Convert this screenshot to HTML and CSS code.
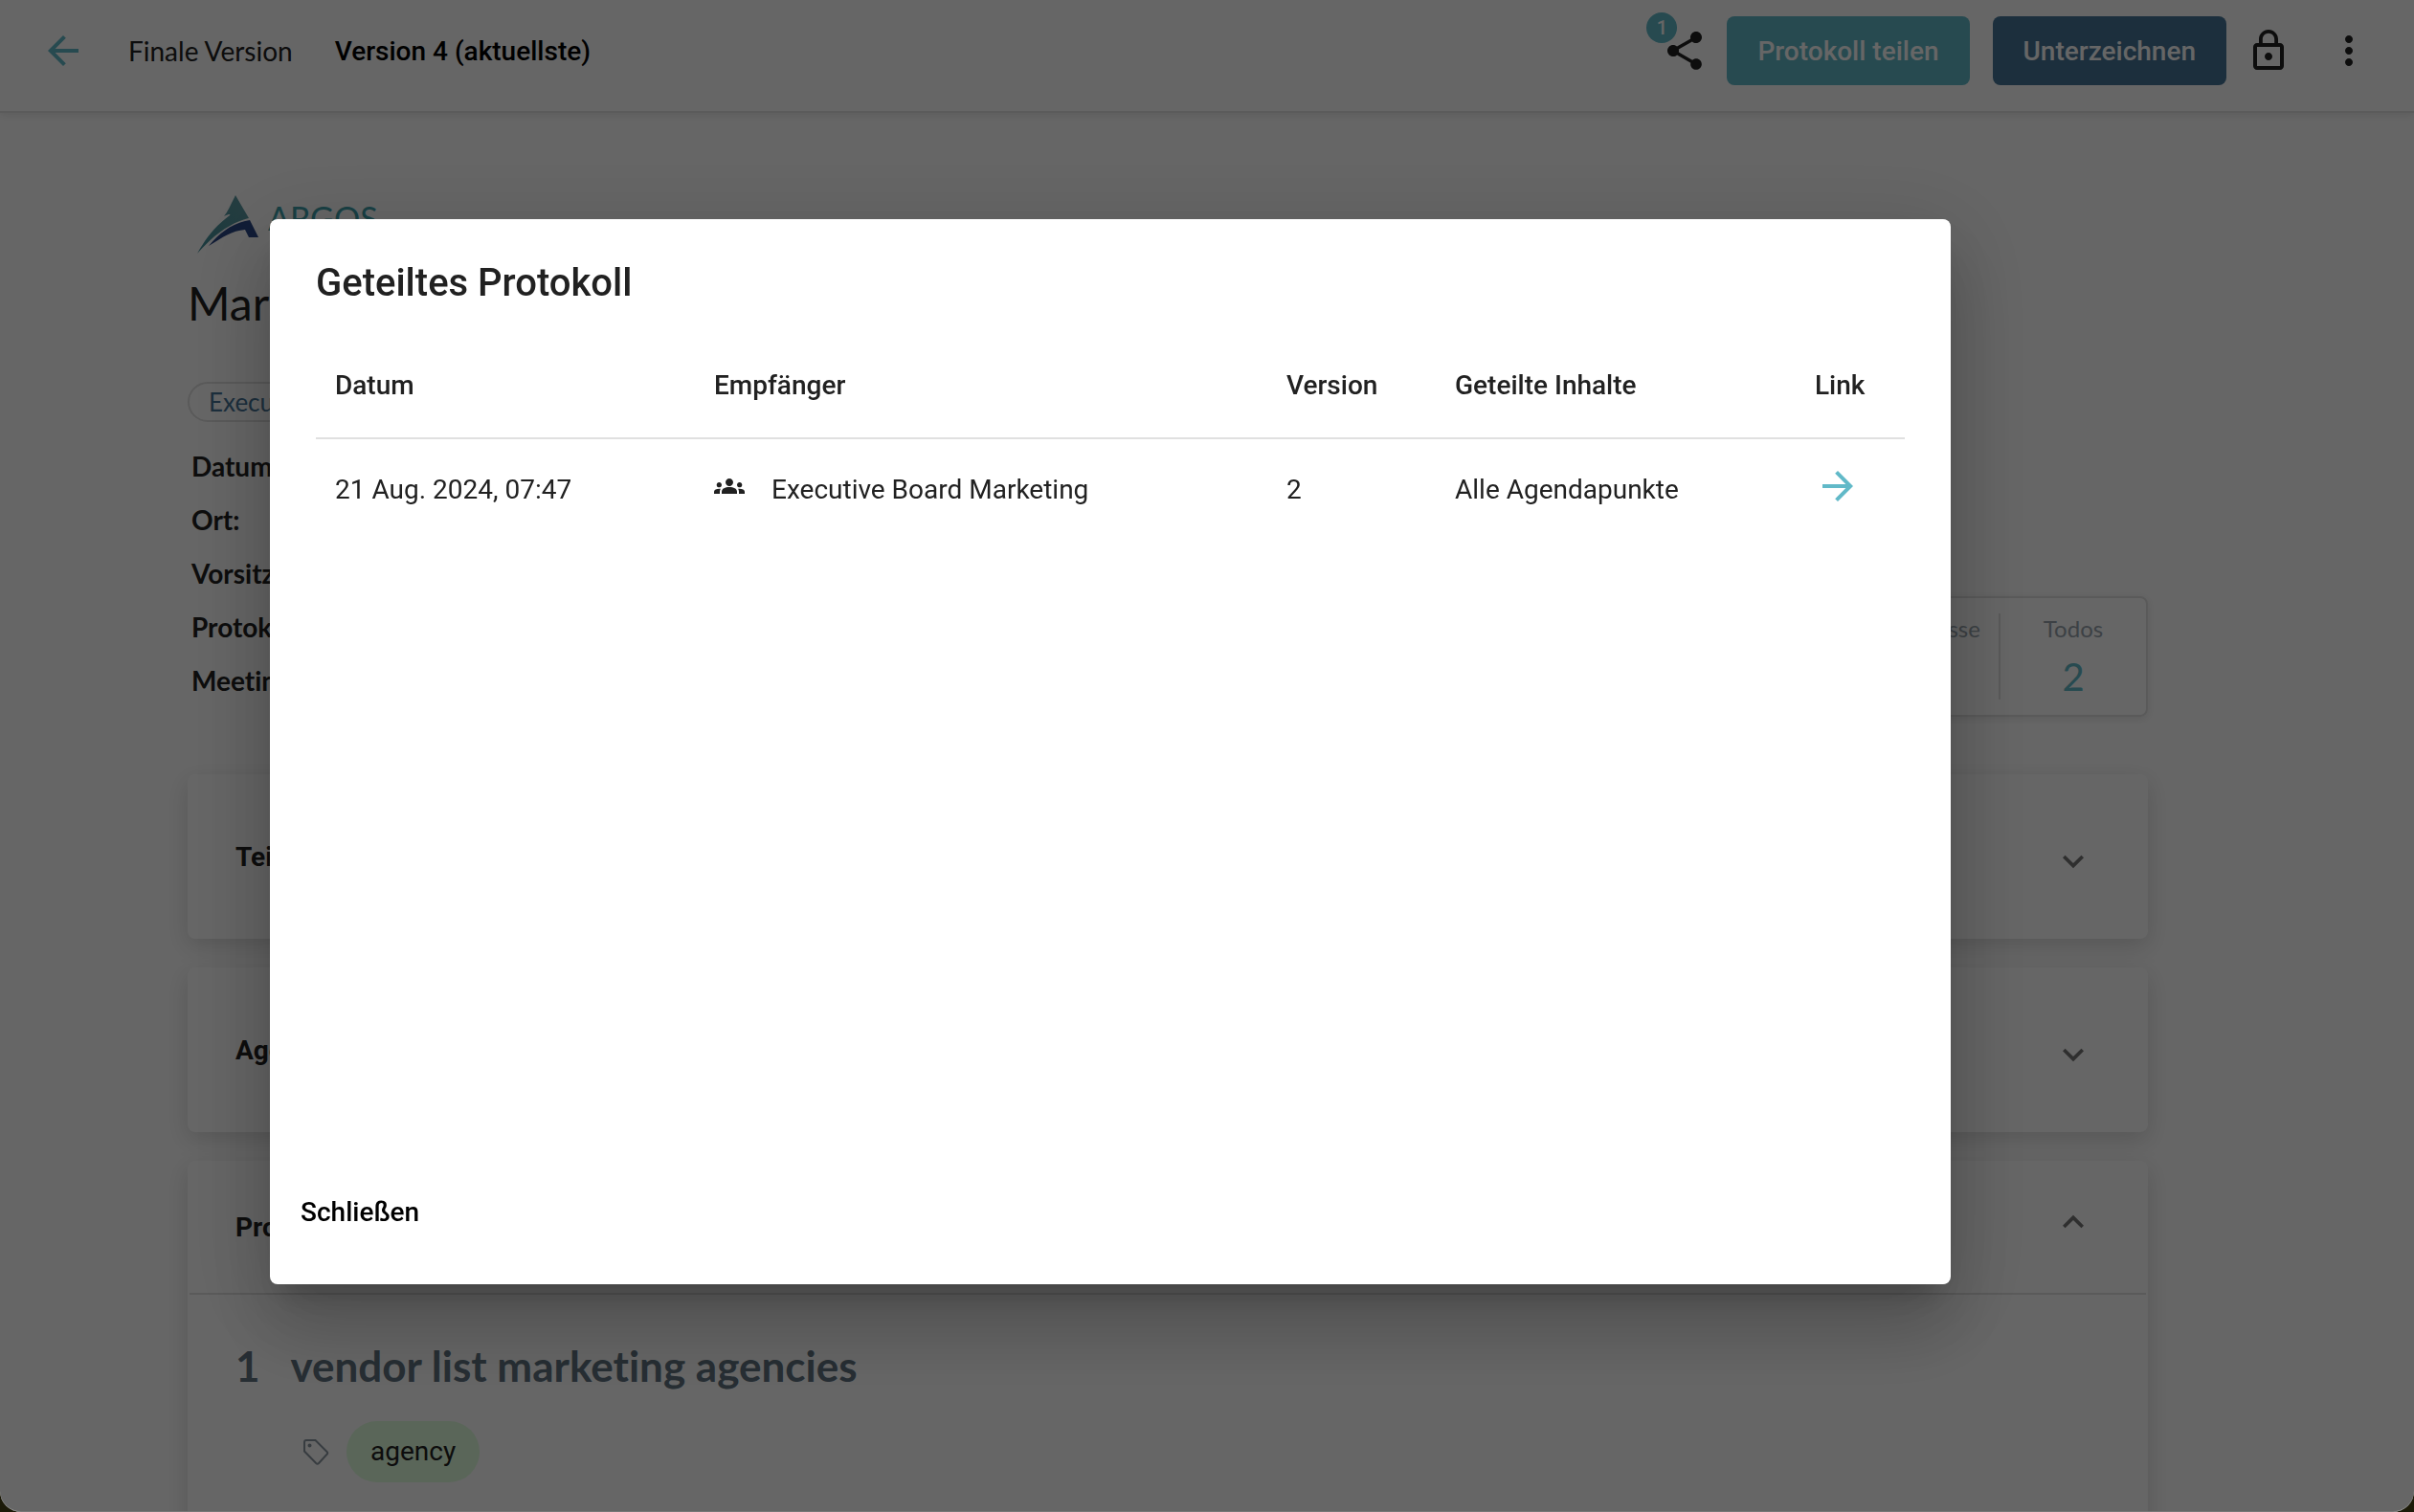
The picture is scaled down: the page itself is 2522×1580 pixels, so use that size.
FILE: index.html
```
<!DOCTYPE html>
<html lang="de">
<head>
    <meta charset="UTF-8">
    <meta name="viewport" content="width=device-width, initial-scale=1.0">
    <title>Geteiltes Protokoll</title>
    <link rel="stylesheet" href="styles.css">
</head>
<body>
    <div class="app">
        <header class="toolbar">
            <button class="icon-button back" aria-label="Zurück">
                <svg class="icon" viewBox="0 0 24 24"><path d="M20 11H7.83l5.59-5.59L12 4l-8 8 8 8 1.41-1.41L7.83 13H20v-2z"/></svg>
            </button>
            <span class="toolbar-title">Finale Version</span>
            <span class="toolbar-version">Version 4 (aktuellste)</span>
            <div class="toolbar-actions">
                <button class="icon-button share" aria-label="Geteiltes Protokoll">
                    <svg class="icon" viewBox="0 0 24 24"><path d="M18 16.08c-.76 0-1.44.3-1.96.77L8.91 12.7c.05-.23.09-.46.09-.7s-.04-.47-.09-.7l7.05-4.11c.54.5 1.25.81 2.04.81 1.66 0 3-1.34 3-3s-1.34-3-3-3-3 1.34-3 3c0 .24.04.47.09.7L8.04 9.81C7.5 9.31 6.79 9 6 9c-1.66 0-3 1.34-3 3s1.34 3 3 3c.79 0 1.5-.31 2.04-.81l7.12 4.16c-.05.21-.08.43-.08.65 0 1.61 1.31 2.92 2.92 2.92s2.92-1.31 2.92-2.92-1.31-2.92-2.92-2.92z"/></svg>
                    <span class="badge">1</span>
                </button>
                <button class="button button-teal">Protokoll teilen</button>
                <button class="button button-blue">Unterzeichnen</button>
                <button class="icon-button lock" aria-label="Sperren">
                    <svg class="icon" viewBox="0 0 24 24"><path d="M12 17c1.1 0 2-.9 2-2s-.9-2-2-2-2 .9-2 2 .9 2 2 2zm6-9h-1V6c0-2.76-2.24-5-5-5S7 3.24 7 6v2H6c-1.1 0-2 .9-2 2v10c0 1.1.9 2 2 2h12c1.1 0 2-.9 2-2V10c0-1.1-.9-2-2-2zM8.9 6c0-1.71 1.39-3.1 3.1-3.1s3.1 1.39 3.1 3.1v2H8.9V6zM18 20H6V10h12v10z"/></svg>
                </button>
                <button class="icon-button more" aria-label="Mehr">
                    <svg class="icon" viewBox="0 0 24 24"><path d="M12 8c1.1 0 2-.9 2-2s-.9-2-2-2-2 .9-2 2 .9 2 2 2zm0 2c-1.1 0-2 .9-2 2s.9 2 2 2 2-.9 2-2-.9-2-2-2zm0 6c-1.1 0-2 .9-2 2s.9 2 2 2 2-.9 2-2-.9-2-2-2z"/></svg>
                </button>
            </div>
        </header>

        <main class="content">
            <div class="logo">
                <svg class="logo-mark" viewBox="0 0 64 61">
                    <defs>
                        <linearGradient id="teal" x1="0" y1="1" x2="1" y2="0">
                            <stop offset="0" stop-color="#43909b"/>
                            <stop offset="1" stop-color="#5f9aa2"/>
                        </linearGradient>
                    </defs>
                    <path fill="url(#teal)" d="M40 0L54 24C34 29 17 42 0 61C9 45 19 32 34 21C35 20 34 19 28 22C32 17 34 12 40 0Z"/>
                    <path fill="#2b4787" d="M55 26L64 44H54L50 36C36 37 25 45 12 53C23 40 36 29 55 26Z"/>
                </svg>
                <span class="logo-text">ARGOS</span>
            </div>
            <h1>Marketing Meeting</h1>
            <span class="board-chip">Executive Board Marketing</span>

            <div class="summary">
                <dl class="details">
                    <dt>Datum:</dt>
                    <dt>Ort:</dt>
                    <dt>Vorsitz:</dt>
                    <dt>Protokoll:</dt>
                    <dt>Meeting:</dt>
                </dl>
                <div class="stats">
                    <div class="stat"><span>Beschlüsse</span><strong>1</strong></div>
                    <div class="stat"><span>Todos</span><strong>2</strong></div>
                </div>
            </div>

            <section class="card">
                <div class="card-header">
                    <h2>Teilnehmer</h2>
                    <svg class="chevron" viewBox="0 0 24 24"><path d="M7.41 11.3L12 15.88l4.59-4.58L18 12.71l-6 6-6-6z"/></svg>
                </div>
            </section>
            <section class="card">
                <div class="card-header">
                    <h2>Agenda</h2>
                    <svg class="chevron" viewBox="0 0 24 24"><path d="M7.41 11.3L12 15.88l4.59-4.58L18 12.71l-6 6-6-6z"/></svg>
                </div>
            </section>
            <section class="card card-open">
                <div class="card-header">
                    <h2>Protokoll</h2>
                    <svg class="chevron" viewBox="0 0 24 24"><path d="M7.41 11.3L12 15.88l4.59-4.58L18 12.71l-6 6-6-6z"/></svg>
                </div>
                <div class="card-body">
                    <h3><span class="number">1</span>vendor list marketing agencies</h3>
                    <div class="tags">
                        <svg class="tag-icon" viewBox="0 0 28 28"><path d="M2 4a2 2 0 0 1 2-2H13.500L25.500 14a2 2 0 0 1 0 2.800L17 26a2 2 0 0 1-2.800 0L2 13.500z"/><circle cx="7.500" cy="7.500" r="1"/></svg>
                        <span class="tag">agency</span>
                    </div>
                </div>
            </section>
        </main>
    </div>

    <div class="overlay">
        <div class="dialog" role="dialog" aria-modal="true" aria-labelledby="dialog-title">
            <h2 class="dialog-title" id="dialog-title">Geteiltes Protokoll</h2>
            <table class="shares">
                <colgroup>
                    <col class="col-date">
                    <col class="col-recipient">
                    <col class="col-version">
                    <col class="col-content">
                    <col class="col-link">
                </colgroup>
                <thead>
                    <tr>
                        <th>Datum</th>
                        <th>Empfänger</th>
                        <th>Version</th>
                        <th>Geteilte Inhalte</th>
                        <th>Link</th>
                    </tr>
                </thead>
                <tbody>
                    <tr>
                        <td>21 Aug. 2024, 07:47</td>
                        <td>
                            <div class="recipient">
                                <svg class="group-icon" viewBox="0 0 24 24"><path d="M12 12.75c1.63 0 3.07.39 4.24.9 1.08.48 1.76 1.56 1.76 2.73V18H6v-1.61c0-1.18.68-2.26 1.76-2.73 1.17-.52 2.61-.91 4.24-.91zM4 13c1.1 0 2-.9 2-2s-.9-2-2-2-2 .9-2 2 .9 2 2 2zm1.13 1.1c-.37-.06-.74-.1-1.13-.1-.99 0-1.93.21-2.78.58C.48 14.9 0 15.62 0 16.43V18h4.5v-1.61c0-.83.23-1.61.63-2.29zM20 13c1.1 0 2-.9 2-2s-.9-2-2-2-2 .9-2 2 .9 2 2 2zm4 3.43c0-.81-.48-1.53-1.22-1.85-.85-.37-1.79-.58-2.78-.58-.39 0-.76.04-1.13.1.4.68.63 1.46.63 2.29V18H24v-1.57zM12 6c1.66 0 3 1.34 3 3s-1.34 3-3 3-3-1.34-3-3 1.34-3 3-3z"/></svg>
                                Executive Board Marketing
                            </div>
                        </td>
                        <td>2</td>
                        <td>Alle Agendapunkte</td>
                        <td class="link-cell">
                            <a href="#" aria-label="Protokoll öffnen">
                                <svg class="icon" viewBox="0 0 24 24"><path d="M12 4l-1.41 1.41L16.17 11H4v2h12.17l-5.58 5.59L12 20l8-8z"/></svg>
                            </a>
                        </td>
                    </tr>
                </tbody>
            </table>
            <div class="dialog-actions">
                <button class="close">Schließen</button>
            </div>
        </div>
    </div>
</body>
</html>
```

FILE: styles.css
```
* {
    box-sizing: border-box;
}
body {
    margin: 0;
    background: #1c1a08;
    font-family: Lato, sans-serif;
    font-size: 28px;
    font-variant-ligatures: none;
    color: #212121;
    overflow: hidden;
}
h1, h2, h3, dl {
    margin: 0;
}
button {
    font-family: Roboto, sans-serif;
    font-size: 28px;
    font-weight: 500;
    border: none;
    padding: 0;
    background: none;
    cursor: pointer;
}
svg {
    display: block;
    flex: none;
    fill: currentColor;
}
.icon {
    width: 48px;
    height: 48px;
}
.app {
    height: 100vh;
    overflow: hidden;
    background: #fff;
    border-radius: 0 0 22px 22px;
}

/* toolbar */
.toolbar {
    display: flex;
    align-items: center;
    padding: 17px 44px 27px 42px;
    border-bottom: 2px solid #e4e4e4;
    box-shadow: 0 2px 8px rgba(0, 0, 0, 0.1);
}
.icon-button {
    position: relative;
    color: #212121;
}
.back {
    color: #61b9c8;
}
.toolbar-title {
    margin-left: 44px;
}
.toolbar-version {
    margin-left: 44px;
    font-family: Roboto, sans-serif;
    font-weight: 500;
    color: #000;
}
.toolbar-actions {
    display: flex;
    align-items: center;
    margin-left: auto;
}
.badge {
    position: absolute;
    top: -16px;
    left: -16px;
    width: 32px;
    height: 32px;
    border-radius: 50%;
    background: #61b9c8;
    color: #fff;
    font-size: 20px;
    line-height: 32px;
    text-align: center;
}
.button {
    height: 72px;
    padding: 0 32px;
    border-radius: 8px;
    color: #fff;
}
.button-teal {
    margin-left: 20px;
    background: #61b9c8;
}
.button-blue {
    margin-left: 24px;
    background: #467598;
}
.lock {
    margin-left: 20px;
}
.more {
    margin-left: 36px;
}

/* page */
.content {
    padding: 86px 278px 0 196px;
}
.logo {
    display: flex;
    gap: 10px;
    padding-left: 10px;
}
.logo-mark {
    width: 64px;
    height: 61px;
}
.logo-text {
    font-size: 34px;
    line-height: 48px;
    color: #3fa0aa;
}
h1 {
    margin-top: 22px;
    font-size: 48px;
    font-weight: 400;
    line-height: 60px;
}
.board-chip {
    display: inline-block;
    margin-top: 52px;
    padding: 0 20px;
    border: 2px solid #e0e0e0;
    border-radius: 21px;
    font-size: 26px;
    line-height: 38px;
    color: #467598;
}
.summary {
    display: flex;
    justify-content: space-between;
    align-items: flex-end;
    margin-top: 18px;
}
.details {
    padding: 0 0 10px 4px;
    font-weight: 700;
    line-height: 56px;
}
.stats {
    display: flex;
    padding: 16px 0;
    border: 2px solid #e0e0e0;
    border-radius: 8px;
    box-shadow: 0 2px 8px rgba(0, 0, 0, 0.1);
}
.stat {
    display: flex;
    flex-direction: column;
    align-items: center;
    gap: 10px;
    width: 154px;
    font-size: 24px;
    line-height: 32px;
    color: #98a4ac;
}
.stat + .stat {
    border-left: 2px solid #e0e0e0;
}
.stat strong {
    font-size: 40px;
    font-weight: 400;
    line-height: 48px;
    color: #61b9c8;
}

/* cards */
.card {
    margin-top: 30px;
    border-radius: 8px;
    background: #fff;
    box-shadow: 0 8px 24px rgba(0, 0, 0, 0.15);
}
.summary + .card {
    margin-top: 60px;
}
.card-header {
    display: flex;
    justify-content: space-between;
    align-items: center;
    height: 172px;
    padding: 0 56px 0 50px;
}
.card h2 {
    font-family: Roboto, sans-serif;
    font-size: 28px;
    font-weight: 700;
}
.chevron {
    width: 44px;
    height: 44px;
    color: #757575;
}
.card-open .card-header {
    height: 140px;
    margin: 0 2px;
    border-bottom: 2px solid #e0e0e0;
    padding: 0 54px 0 48px;
}
.card-open .chevron {
    transform: rotate(180deg);
}
.card-body {
    height: 400px;
    padding: 48px 50px;
}
h3 {
    display: flex;
    gap: 32px;
    font-size: 44px;
    font-weight: 700;
    line-height: 52px;
    color: #617380;
}
.tags {
    display: flex;
    align-items: center;
    gap: 18px;
    margin-top: 32px;
    padding-left: 70px;
}
.tag-icon {
    width: 28px;
    height: 28px;
    fill: none;
    stroke: #8a96a0;
    stroke-width: 2;
}
.tag {
    padding: 0 25px;
    border-radius: 32px;
    background: #e1fedf;
    font-family: Roboto, sans-serif;
    line-height: 64px;
}

/* dialog */
.overlay {
    position: fixed;
    inset: 0;
    display: flex;
    padding: 229px 484px 237px 282px;
    background: rgba(0, 0, 0, 0.6);
    border-bottom: 1px solid #777;
    border-radius: 0 0 22px 22px;
}
.dialog {
    display: flex;
    flex-direction: column;
    flex: 1;
    padding: 39px 48px 40px;
    border-radius: 8px;
    background: #fff;
    box-shadow: 0 22px 30px -14px rgba(0, 0, 0, 0.2), 0 48px 76px 6px rgba(0, 0, 0, 0.14), 0 18px 92px 16px rgba(0, 0, 0, 0.12);
    font-family: Roboto, sans-serif;
}
.dialog-title {
    font-size: 40px;
    font-weight: 500;
    line-height: 56px;
}
.shares {
    width: 100%;
    margin-top: 22px;
    border-collapse: collapse;
    table-layout: fixed;
}
.shares th,
.shares td {
    padding: 0 20px;
    text-align: left;
}
.shares th {
    height: 112px;
    padding-top: 2px;
    border-bottom: 2px solid #e0e0e0;
    font-weight: 500;
}
.shares td {
    height: 106px;
}
.col-date {
    width: 396px;
}
.col-recipient {
    width: 598px;
}
.col-version {
    width: 176px;
}
.col-content {
    width: 376px;
}
.recipient {
    display: flex;
    align-items: flex-start;
    gap: 28px;
    line-height: 40px;
}
.group-icon {
    width: 32px;
    height: 32px;
}
.link-cell a {
    display: inline-block;
    color: #61b9c8;
}
.dialog-actions {
    margin-top: auto;
}
.close {
    height: 72px;
    margin-left: -32px;
    padding: 0 16px;
    color: #000;
}
```
